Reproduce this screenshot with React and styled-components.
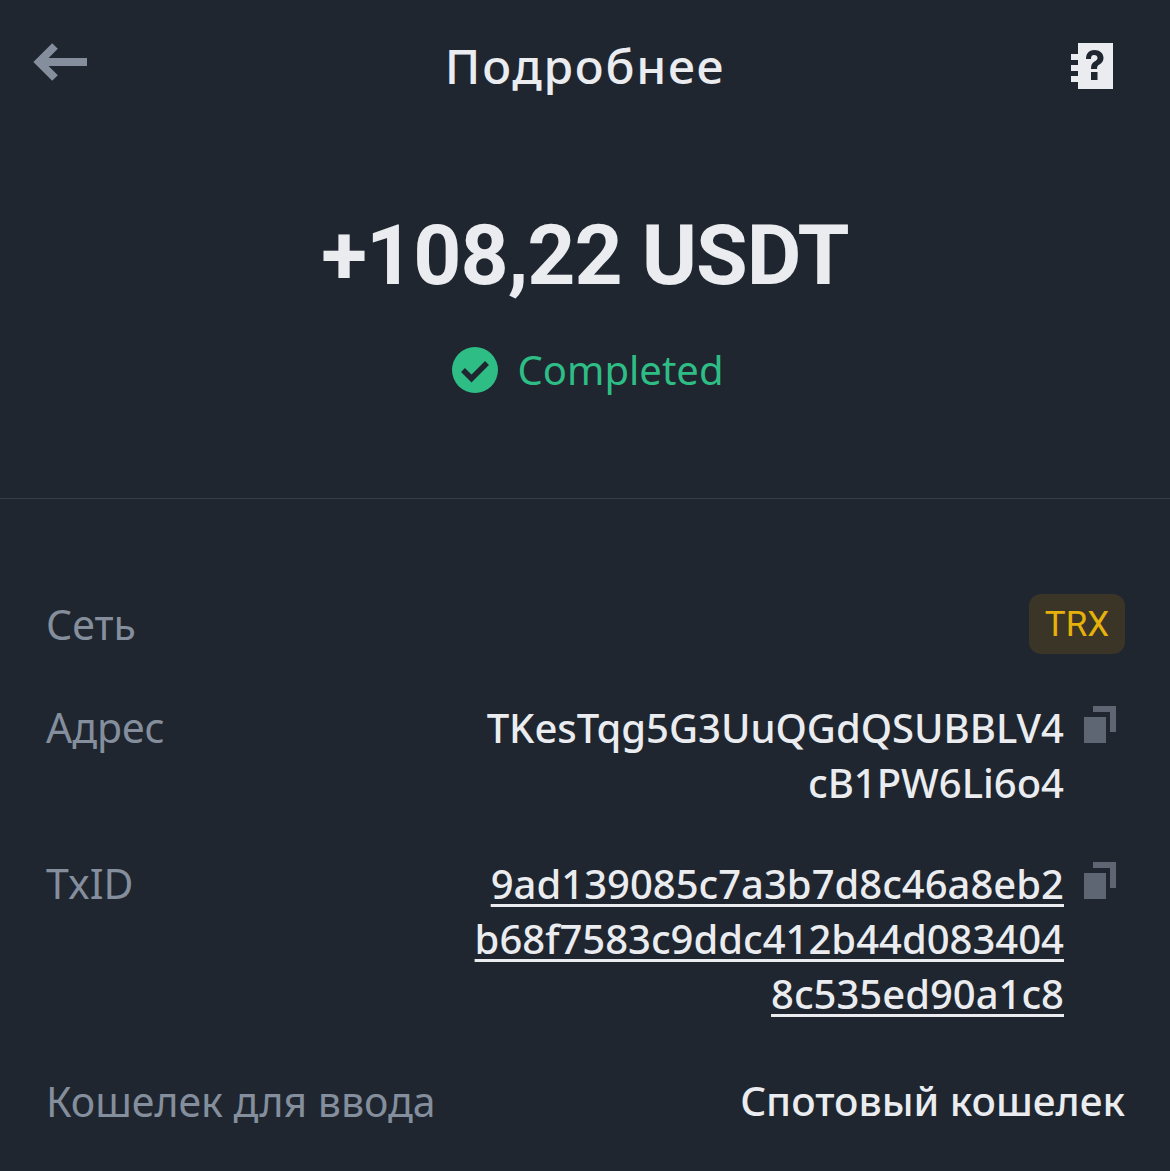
import styled, { createGlobalStyle } from "styled-components";

const GlobalStyle = createGlobalStyle`
  html, body {
    margin: 0;
    padding: 0;
    background: #1f2630;
  }
  body {
    font-family: "Noto Sans", "Roboto", sans-serif;
  }
`;

const Page = styled.div`
  width: 1170px;
  height: 1171px;
  overflow: hidden;
  background: #1f2630;
  color: #eaecef;
`;

const Header = styled.header`
  height: 132px;
  padding: 0 32px;
  box-sizing: border-box;
  display: grid;
  grid-template-columns: 1fr auto 1fr;
  align-items: center;
`;

const HeaderTitle = styled.h1`
  margin: 0;
  font-size: 48px;
  line-height: 60px;
  font-weight: 500;
  letter-spacing: 1.7px;
  color: #eaecef;
`;

const IconSlot = styled.div`
  display: flex;
  align-items: center;
  justify-content: ${(props) => props.$justify};
  margin: ${(props) => props.$margin};
`;

const Summary = styled.section`
  height: 367px;
  box-sizing: border-box;
  border-bottom: 1px solid #373e49;
  padding-top: 74px;
  display: flex;
  flex-direction: column;
  align-items: center;
`;

const Amount = styled.div`
  font-family: "Roboto", sans-serif;
  font-size: 84px;
  line-height: 100px;
  font-weight: 700;
  letter-spacing: -1px;
  color: #eaecef;
`;

const Status = styled.div`
  margin-top: 39px;
  padding-left: 5px;
  display: flex;
  align-items: center;
  gap: 20px;
  font-size: 40px;
  line-height: 50px;
  color: #2ebd85;
`;

const Details = styled.section`
  padding: 95px 45px 0 46px;
  display: flex;
  flex-direction: column;
`;

const Row = styled.div`
  display: flex;
  justify-content: space-between;
  align-items: flex-start;
  margin-bottom: ${(props) => props.$gap}px;
`;

const Label = styled.div`
  font-size: 41px;
  line-height: 60px;
  color: #848e9c;
`;

const Badge = styled.div`
  width: 96px;
  height: 60px;
  border-radius: 12px;
  background: #3a3527;
  color: #e6b10b;
  font-family: "Roboto", sans-serif;
  font-size: 35px;
  display: flex;
  align-items: center;
  justify-content: center;
`;

const ValueWithCopy = styled.div`
  display: flex;
  align-items: flex-start;
  gap: 19px;
  margin-right: 8px;
`;

const CopySlot = styled.div`
  margin-top: 9px;
  display: flex;
`;

const Lines = styled.div`
  margin-top: 3px;
  display: flex;
  flex-direction: column;
  align-items: flex-end;
`;

const HashLine = styled.span`
  font-size: 40px;
  line-height: 55px;
  font-weight: 500;
  color: #eaecef;
  text-decoration: ${(props) => (props.$link ? "underline" : "none")};
  text-decoration-thickness: 3px;
  text-underline-offset: 5px;
`;

const PlainValue = styled.div`
  font-size: 40.500px;
  line-height: 60px;
  font-weight: 500;
  color: #eaecef;
`;

function BackIcon() {
  return (
    <svg width="56" height="40" viewBox="0 0 56 40">
      <path d="M55 20H8" stroke="#848e9c" strokeWidth="8" fill="none" />
      <path d="M23 4L7 20l16 16" stroke="#848e9c" strokeWidth="8" fill="none" />
    </svg>
  );
}

function HelpBookIcon() {
  return (
    <svg width="42" height="46" viewBox="0 0 42 46">
      <path d="M7 0h35v46H7V39H0v-6h7v-5H0v-6h7v-5H0v-6h7z" fill="#eaecef" />
      <path
        d="M15 16c0-6 3.500-9 8.500-9s9 3 9 8c0 3-1.500 5-4 6.500-2 1.200-2.500 2-2.500 4.500h-6c0-4 1-6 3.500-7.500 2-1.200 3-2 3-3.500 0-1.800-1.300-3-3.500-3s-3 1.500-3 4z"
        fill="#1f2630"
      />
      <rect x="20" y="29" width="6.500" height="8" fill="#1f2630" />
    </svg>
  );
}

function CheckIcon() {
  return (
    <svg width="46" height="46" viewBox="0 0 46 46">
      <circle cx="23" cy="23" r="23" fill="#2ebd85" />
      <path d="M11 23l8.500 8.500L35 16" stroke="#1f2630" strokeWidth="5.500" fill="none" />
    </svg>
  );
}

function CopyIcon() {
  return (
    <svg width="34" height="38" viewBox="0 0 34 38">
      <path d="M10 0h23v26h-6V6H10z" fill="#5e6673" />
      <rect x="1" y="11" width="22" height="26" fill="#5e6673" />
    </svg>
  );
}

export default function App() {
  return (
    <Page>
      <GlobalStyle />
      <Header>
        <IconSlot $justify="flex-start" $margin="-8px 0 0 0">
          <BackIcon />
        </IconSlot>
        <HeaderTitle>Подробнее</HeaderTitle>
        <IconSlot $justify="flex-end" $margin="0 25px 0 0">
          <HelpBookIcon />
        </IconSlot>
      </Header>
      <Summary>
        <Amount>+108,22 USDT</Amount>
        <Status>
          <CheckIcon />
          Completed
        </Status>
      </Summary>
      <Details>
        <Row $gap={43}>
          <Label>Сеть</Label>
          <Badge>TRX</Badge>
        </Row>
        <Row $gap={43}>
          <Label>Адрес</Label>
          <ValueWithCopy>
            <Lines>
              <HashLine>TKesTqg5G3UuQGdQSUBBLV4</HashLine>
              <HashLine>cB1PW6Li6o4</HashLine>
            </Lines>
            <CopySlot>
              <CopyIcon />
            </CopySlot>
          </ValueWithCopy>
        </Row>
        <Row $gap={50}>
          <Label>TxID</Label>
          <ValueWithCopy>
            <Lines>
              <HashLine $link>9ad139085c7a3b7d8c46a8eb2</HashLine>
              <HashLine $link>b68f7583c9ddc412b44d083404</HashLine>
              <HashLine $link>8c535ed90a1c8</HashLine>
            </Lines>
            <CopySlot>
              <CopyIcon />
            </CopySlot>
          </ValueWithCopy>
        </Row>
        <Row $gap={0}>
          <Label>Кошелек для ввода</Label>
          <PlainValue>Спотовый кошелек</PlainValue>
        </Row>
      </Details>
    </Page>
  );
}
